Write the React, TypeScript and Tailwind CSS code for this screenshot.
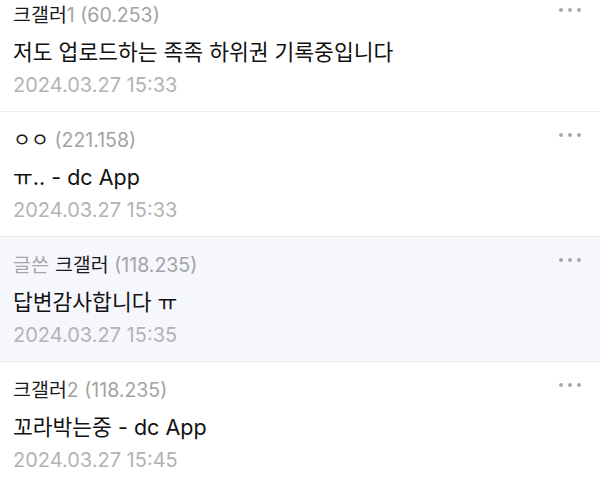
import React from "react";

type Row = {
  prefix?: string;
  name: string;
  suffix: string;
  body: string;
  date: string;
  hl?: boolean;
};

const rows: Row[] = [
  { name: "크갤러", suffix: "1 (60.253)", body: "저도 업로드하는 족족 하위권 기록중입니다", date: "2024.03.27 15:33" },
  { name: "ㅇㅇ", suffix: " (221.158)", body: "ㅠ.. - dc App", date: "2024.03.27 15:33" },
  { prefix: "글쓴", name: "크갤러", suffix: " (118.235)", body: "답변감사합니다 ㅠ", date: "2024.03.27 15:35", hl: true },
  { name: "크갤러", suffix: "2 (118.235)", body: "꼬라박는중 - dc App", date: "2024.03.27 15:45" },
];

function Dots() {
  return (
    <div className="flex gap-[5px] items-center">
      <span className="w-[4px] h-[4px] rounded-full bg-[#a8a8a8]" />
      <span className="w-[4px] h-[4px] rounded-full bg-[#a8a8a8]" />
      <span className="w-[4px] h-[4px] rounded-full bg-[#a8a8a8]" />
    </div>
  );
}

export default function App() {
  return (
    <div
      className="w-[600px] h-[479px] overflow-hidden bg-white"
      style={{ fontFamily: 'Inter, "Noto Sans CJK KR", sans-serif' }}
    >
      <div className="-mt-[13px]">
        {rows.map((r, i) => (
          <div
            key={i}
            className={`relative h-[125px] border-b border-[#ececec] pl-[13px] pt-[16px] ${r.hl ? "bg-[#f6f7fc]" : "bg-white"}`}
          >
            <div className="absolute right-[19px] top-[21px]">
              <Dots />
            </div>
            <div className="h-[24px] leading-[24px] text-[19.5px] flex items-center">
              {r.prefix && <span className="text-[#a6a6a6] mr-[6px]">{r.prefix}</span>}
              <span className="text-[#1a1a1a]">{r.name}</span>
              <span className="text-[#a3a3a3] whitespace-pre">{r.suffix}</span>
            </div>
            <div className="mt-[11px] h-[28px] leading-[28px] text-[21.5px] text-[#111111]">
              {r.body}
            </div>
            <div className="mt-[7px] h-[24px] leading-[24px] text-[20px] text-[#b3b3b3]">
              {r.date}
            </div>
          </div>
        ))}
      </div>
    </div>
  );
}
